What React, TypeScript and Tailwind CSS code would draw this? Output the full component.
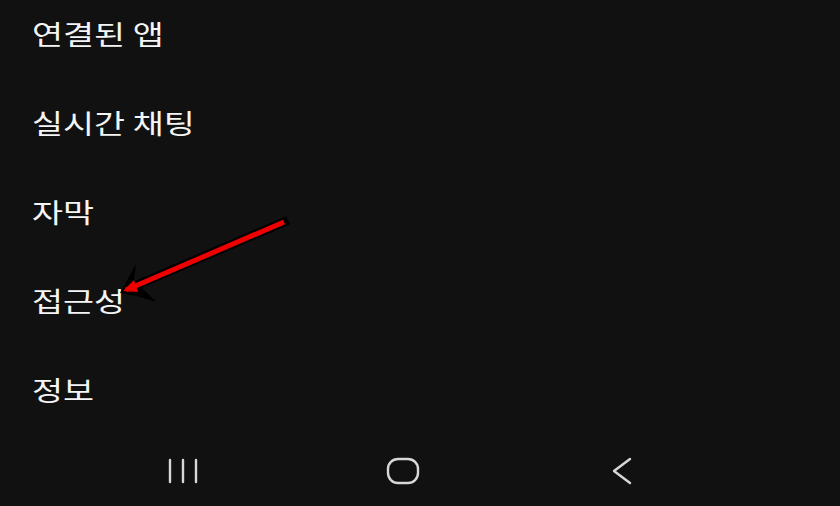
import React from "react";

const items = ["연결된 앱", "실시간 채팅", "자막", "접근성", "정보"];

export default function App() {
  return (
    <div
      className="relative w-[840px] h-[506px] overflow-hidden bg-[#111111] text-white"
      style={{ fontFamily: '"Noto Sans CJK KR", "Noto Sans", sans-serif' }}
    >
      <div className="flex flex-col mt-[-11px] pl-[32px]">
        {items.map((t) => (
          <div key={t} className="h-[89px] flex items-center">
            <span className="text-[27px] font-normal leading-none text-[#f5f5f5] origin-left scale-x-[1.25] inline-block">
              {t}
            </span>
          </div>
        ))}
      </div>
      <div className="absolute left-0 right-0 bottom-0 h-[72px] flex items-center">
        <div className="w-[366px] flex justify-center pt-[2px]">
          <svg width="30" height="26" viewBox="0 0 30 26">
            <g stroke="#d8d8d8" strokeWidth="2.4" strokeLinecap="round">
              <line x1="2" y1="2" x2="2" y2="24" />
              <line x1="15" y1="2" x2="15" y2="24" />
              <line x1="28" y1="2" x2="28" y2="24" />
            </g>
          </svg>
        </div>
        <div className="w-[74px] flex justify-center pt-[2px]">
          <svg width="34" height="28" viewBox="0 0 34 28">
            <rect x="2" y="2" width="30" height="24" rx="10" fill="none" stroke="#d8d8d8" strokeWidth="2.4" />
          </svg>
        </div>
        <div className="w-[364px] flex justify-center pt-[2px]">
          <svg width="22" height="28" viewBox="0 0 22 28">
            <polyline points="19,2 3,14 19,26" fill="none" stroke="#d8d8d8" strokeWidth="2.4" strokeLinecap="round" strokeLinejoin="round" />
          </svg>
        </div>
      </div>
      <svg className="absolute left-0 top-0" width="840" height="506" viewBox="0 0 840 506">
        <line x1="284" y1="222" x2="132" y2="287" stroke="#000" strokeWidth="9" strokeLinecap="square" />
        <path d="M120 293 L136 264 L134 280 L156 302 L137 296 Z" fill="#000" />
        <line x1="284" y1="222" x2="126" y2="290" stroke="#ee0000" strokeWidth="5" />
        <path d="M123 291 L134 280 L138 292 Z" fill="#ee0000" />
      </svg>
    </div>
  );
}
